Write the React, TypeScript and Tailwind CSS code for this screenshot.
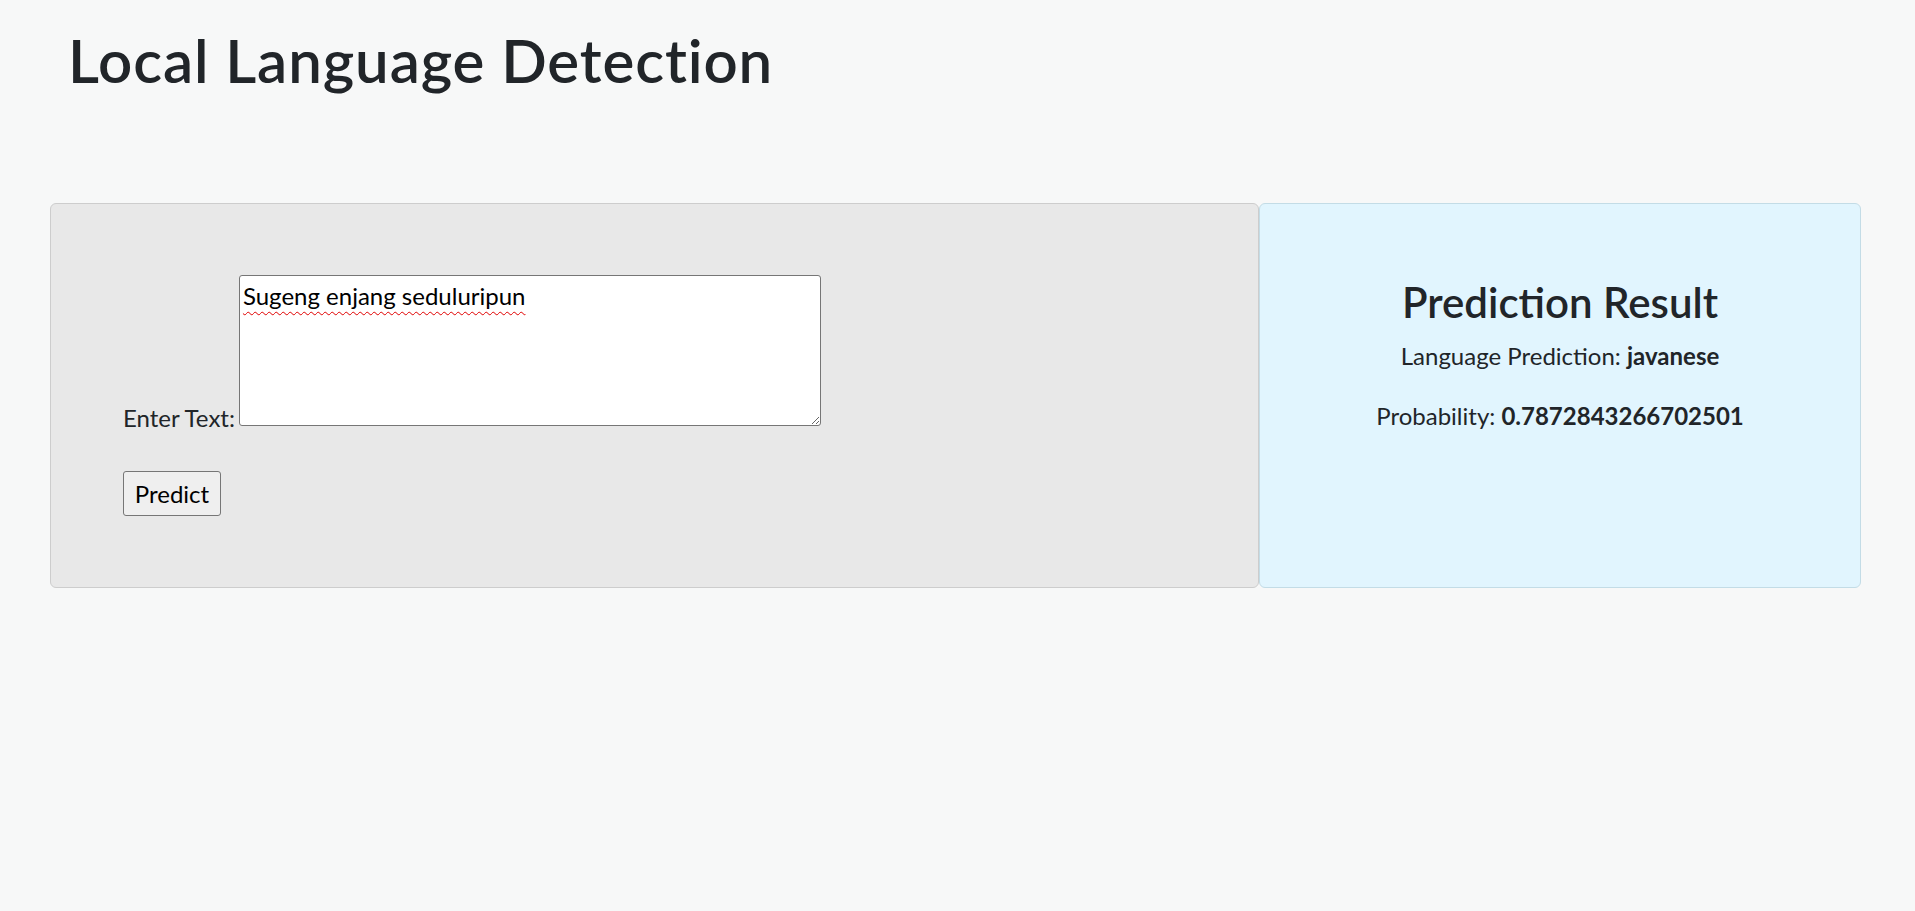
const App = () => {
  return (
    <div className="min-h-screen bg-[#f7f8f8] text-[#212529] font-['Lato','Noto_Sans',sans-serif]">
      <h1 className="pl-[68px] pt-[24px] text-[60px] leading-[72px] font-semibold tracking-[0.9px]">
        Local Language Detection
      </h1>

      <div className="flex ml-[50px] mr-[54px] mt-[107px]">
        {/* input panel */}
        <div className="w-[1209px] h-[385px] bg-[#e8e8e8] border border-[#cdcdcd] rounded-[6px] pt-[71px] pl-[72px]">
          <form onSubmit={(e) => e.preventDefault()}>
            <div className="flex items-end">
              <label htmlFor="text" className="text-[24px] leading-[24px] -mb-[4px] mr-[4px]">
                Enter Text:
              </label>
              <textarea
                id="text"
                defaultValue="Sugeng enjang seduluripun"
                className="w-[582px] h-[151px] bg-white border border-[#767676] rounded-[3px] px-[3px] py-[2px] text-[24px] leading-[36px] text-black underline decoration-wavy decoration-[#e00000] decoration-1 underline-offset-[6px] resize-y"
              />
            </div>
            <button
              type="submit"
              className="mt-[45px] w-[98px] h-[45px] bg-[#efefef] border border-[#767676] rounded-[3px] text-[24px] leading-[24px] text-black"
            >
              Predict
            </button>
          </form>
        </div>

        {/* result panel */}
        <div className="flex-1 h-[385px] bg-[#e1f5fe] border border-[#c3dce6] rounded-[6px] pt-[73px] flex flex-col items-center">
          <h2 className="text-[42px] leading-[50px] font-semibold mb-[11px]">Prediction Result</h2>
          <p className="text-[24px] leading-[36px] mb-[24px]">
            Language Prediction: <strong className="font-bold">javanese</strong>
          </p>
          <p className="text-[24px] leading-[36px]">
            Probability: <strong className="font-bold">0.7872843266702501</strong>
          </p>
        </div>
      </div>
    </div>
  );
};

export default App;
